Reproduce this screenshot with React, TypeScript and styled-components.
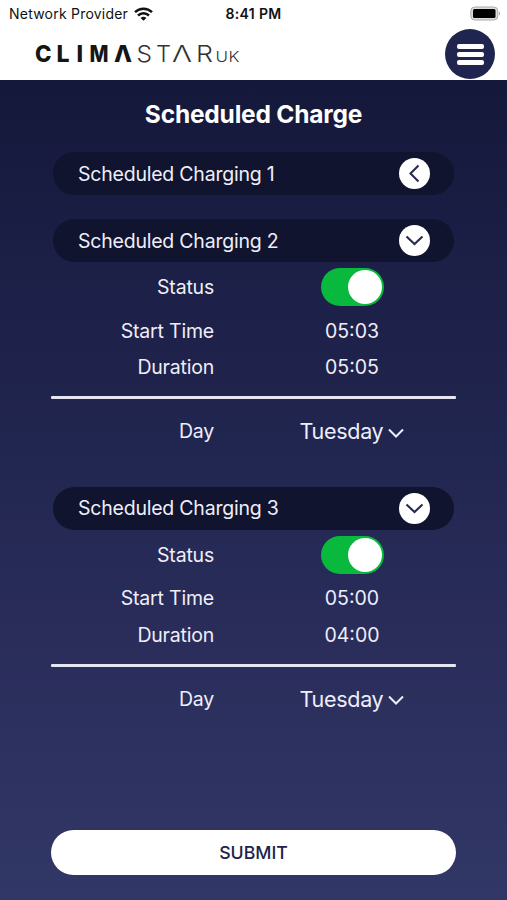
import { useState } from "react";
import styled, { createGlobalStyle } from "styled-components";

type Schedule = {
  id: number;
  open: boolean;
  enabled: boolean;
  start: string;
  duration: string;
  day: string;
};

const initialSchedules: Schedule[] = [
  { id: 1, open: false, enabled: false, start: "00:00", duration: "00:00", day: "Monday" },
  { id: 2, open: true, enabled: true, start: "05:03", duration: "05:05", day: "Tuesday" },
  { id: 3, open: true, enabled: true, start: "05:00", duration: "04:00", day: "Tuesday" },
];

const GlobalStyle = createGlobalStyle`
  * {
    box-sizing: border-box;
  }

  body {
    margin: 0;
    font-family: Inter, "Liberation Sans", sans-serif;
  }

  button {
    font-family: inherit;
    border: none;
    padding: 0;
    cursor: pointer;
  }
`;

const Screen = styled.div`
  display: flex;
  flex-direction: column;
  height: 900px;
  overflow: hidden;
`;

const StatusBar = styled.div`
  display: grid;
  grid-template-columns: 1fr auto 1fr;
  align-items: center;
  height: 28px;
  padding: 0 6px;
  background: #fff;
  color: #111;
  font-size: 14px;
`;

const Carrier = styled.div`
  display: flex;
  align-items: center;
  gap: 6px;
  padding-left: 3px;
  letter-spacing: 0.22px;
  line-height: 26px;
  white-space: nowrap;
`;

const Clock = styled.div`
  padding-bottom: 1px;
  font-weight: 600;
  font-size: 14px;
  letter-spacing: 0.35px;
`;

const Battery = styled.svg`
  justify-self: end;
  margin-bottom: 2px;
`;

const Header = styled.header`
  display: flex;
  align-items: center;
  justify-content: space-between;
  height: 52px;
  padding: 0 12px 0 32px;
  background: #fff;
`;

const LogoMark = styled.svg`
  overflow: visible;
`;

const MenuButton = styled.button`
  display: flex;
  flex-direction: column;
  align-items: center;
  justify-content: center;
  gap: 3px;
  width: 50px;
  height: 50px;
  border-radius: 50%;
  background: #20254f;
`;

const MenuBar = styled.span`
  width: 27px;
  height: 5px;
  border-radius: 2px;
  background: #fff;
`;

const Main = styled.main`
  display: flex;
  flex: 1;
  flex-direction: column;
  padding: 17px 51px 25px;
  background: linear-gradient(#14183a 0%, #1c1f46 22%, #212650 45%, #2a2d5a 68%, #313766 100%);
  color: #eeeefa;
`;

const Title = styled.h1`
  margin: 0 0 21px;
  color: #fff;
  font-size: 24.5px;
  font-weight: 700;
  line-height: 34px;
  letter-spacing: -0.2px;
  text-align: center;
`;

const Section = styled.section<{ $open: boolean }>`
  height: ${({ $open }) => ($open ? "267.5px" : "67px")};
`;

const Pill = styled.div`
  display: flex;
  align-items: center;
  justify-content: space-between;
  height: 43px;
  margin: 0 2px;
  padding: 0 24px 0 25px;
  border-radius: 22px;
  background: #10142e;
  font-size: 19.5px;
  letter-spacing: -0.22px;
`;

const Expand = styled.button`
  display: flex;
  align-items: center;
  justify-content: center;
  width: 31px;
  height: 31px;
  border-radius: 50%;
  background: #fff;
`;

const Row = styled.div<{ $height: number }>`
  display: grid;
  grid-template-columns: 163px 1fr;
  column-gap: 34px;
  align-items: center;
  height: ${({ $height }) => $height}px;
  font-size: 19.5px;
`;

const Label = styled.div`
  letter-spacing: -0.2px;
  text-align: right;
`;

const Value = styled.div`
  display: flex;
  justify-content: center;
  width: 208px;
`;

const Toggle = styled.button<{ $on: boolean }>`
  display: flex;
  justify-content: ${({ $on }) => ($on ? "flex-end" : "flex-start")};
  align-items: center;
  width: 63px;
  height: 38px;
  padding: 0 2px;
  border-radius: 19px;
  background: ${({ $on }) => ($on ? "#08b93e" : "#8a8ca5")};
`;

const Knob = styled.span`
  width: 34px;
  height: 34px;
  border-radius: 50%;
  background: #fff;
`;

const Divider = styled.hr`
  height: 3px;
  margin: 11px 0 13px;
  border: none;
  border-radius: 1px;
  background: #e6e6f2;
`;

const DaySelect = styled.button`
  display: flex;
  align-items: center;
  gap: 5px;
  background: none;
  color: inherit;
  font-size: 21.5px;
  letter-spacing: -0.3px;
`;

const DayArrow = styled.svg`
  margin-top: 3px;
`;

const Submit = styled.button`
  height: 45px;
  margin-top: auto;
  border-radius: 23px;
  background: #fff;
  color: #20224a;
  font-size: 17.7px;
  font-weight: 500;
`;

const Wifi = () => (
  <svg width="19" height="14" viewBox="0 0 19 14" fill="none" stroke="#111" strokeWidth="2.5">
    <path d="M1 5.2C5.8 0.6 13.2 0.6 18 5.2" />
    <path d="M4 8.5C7.2 5.5 11.8 5.5 15 8.5" />
    <path d="M6.6 10.9C8.3 9.4 10.7 9.4 12.4 10.9L9.5 13.8Z" fill="#111" stroke="none" />
  </svg>
);

const Logo = () => (
  <LogoMark width="212" height="28" viewBox="0 0 212 28" fill="#151515" role="img" aria-label="Climastar UK">
    <text y="22" fontSize="23" fontWeight="800">
      <tspan x="3" textLength="16.5" lengthAdjust="spacingAndGlyphs">C</tspan>
      <tspan x="24.5">L</tspan>
      <tspan x="44.5">I</tspan>
      <tspan x="57.5" textLength="19" lengthAdjust="spacingAndGlyphs">M</tspan>
      <tspan x="82" textLength="18" lengthAdjust="spacingAndGlyphs">Λ</tspan>
    </text>
    <text y="22" fontSize="23" fontWeight="300" fill="#333">
      <tspan x="104.5" textLength="15.5" lengthAdjust="spacingAndGlyphs">S</tspan>
      <tspan x="124" textLength="15" lengthAdjust="spacingAndGlyphs">T</tspan>
      <tspan x="140" textLength="20" lengthAdjust="spacingAndGlyphs">Λ</tspan>
      <tspan x="164" textLength="17" lengthAdjust="spacingAndGlyphs">R</tspan>
    </text>
    <text y="22" fontSize="15" fontWeight="300" fill="#333">
      <tspan x="183.5" textLength="12.5" lengthAdjust="spacingAndGlyphs">U</tspan>
      <tspan x="196.5" textLength="11" lengthAdjust="spacingAndGlyphs">K</tspan>
    </text>
  </LogoMark>
);

const Chevron = ({ open }: { open: boolean }) => (
  <svg width="19" height="19" viewBox="0 0 19 19" fill="none" stroke="#292a50" strokeWidth="2.1">
    <path d={open ? "M1.5 5.5L9.5 13L17.5 5.5" : "M13.5 1.5L5.5 9.5L13.5 17.5"} />
  </svg>
);

const App = () => {
  const [schedules, setSchedules] = useState(initialSchedules);

  const flip = (id: number, key: "open" | "enabled") =>
    setSchedules(schedules.map((s) => (s.id === id ? { ...s, [key]: !s[key] } : s)));

  return (
    <Screen>
      <GlobalStyle />
      <StatusBar>
        <Carrier>
          Network Provider
          <Wifi />
        </Carrier>
        <Clock>8:41 PM</Clock>
        <Battery width="31" height="15" viewBox="0 0 31 15">
          <rect x="0.8" y="1" width="27" height="13" rx="4" fill="#ddd" stroke="#aaa" />
          <rect x="3" y="3" width="22.5" height="9" rx="1.5" fill="#000" />
          <path d="M29 5.5Q31 7.5 29 9.5Z" fill="#999" />
        </Battery>
      </StatusBar>
      <Header>
        <Logo />
        <MenuButton aria-label="Menu">
          <MenuBar />
          <MenuBar />
          <MenuBar />
        </MenuButton>
      </Header>
      <Main>
        <Title>Scheduled Charge</Title>
        {schedules.map((s) => (
          <Section key={s.id} $open={s.open}>
            <Pill>
              Scheduled Charging {s.id}
              <Expand aria-label="Expand" onClick={() => flip(s.id, "open")}>
                <Chevron open={s.open} />
              </Expand>
            </Pill>
            {s.open ? (
              <>
                <Row $height={50}>
                  <Label>Status</Label>
                  <Value>
                    <Toggle $on={s.enabled} aria-label="Status" onClick={() => flip(s.id, "enabled")}>
                      <Knob />
                    </Toggle>
                  </Value>
                </Row>
                <Row $height={37}>
                  <Label>Start Time</Label>
                  <Value>{s.start}</Value>
                </Row>
                <Row $height={36}>
                  <Label>Duration</Label>
                  <Value>{s.duration}</Value>
                </Row>
                <Divider />
                <Row $height={38}>
                  <Label>Day</Label>
                  <Value>
                    <DaySelect>
                      {s.day}
                      <DayArrow width="16" height="10" viewBox="0 0 16 10" fill="none" stroke="#eeeefa" strokeWidth="2">
                        <path d="M1 1.5L8 8.5L15 1.5" />
                      </DayArrow>
                    </DaySelect>
                  </Value>
                </Row>
              </>
            ) : null}
          </Section>
        ))}
        <Submit>SUBMIT</Submit>
      </Main>
    </Screen>
  );
};

export default App;
